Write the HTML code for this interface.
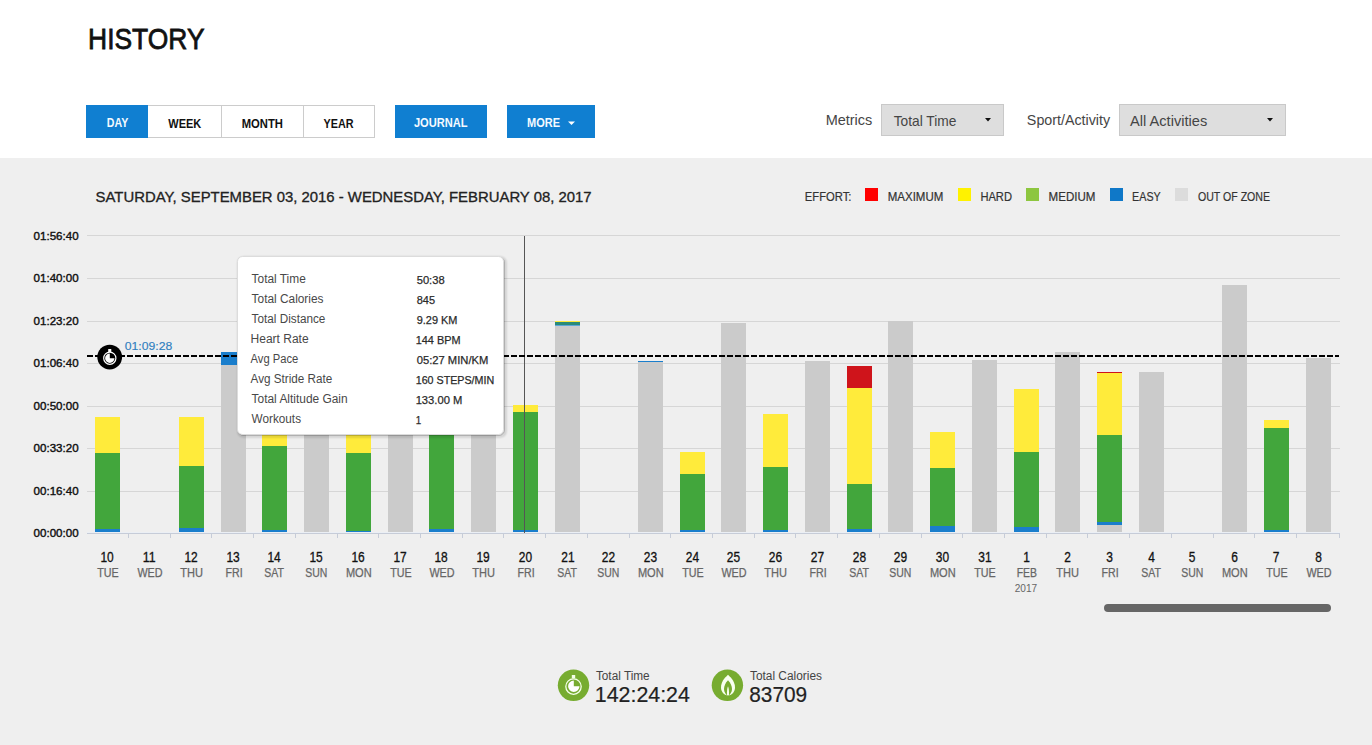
<!DOCTYPE html>
<html><head><meta charset="utf-8"><title>History</title>
<style>
html,body{margin:0;padding:0;width:1372px;height:745px;overflow:hidden;background:#fff;}
svg{display:block;font-family:"Liberation Sans", sans-serif;}
</style></head><body>
<svg width="1372" height="745" viewBox="0 0 1372 745">
<defs><filter id="blur" x="-10%" y="-10%" width="120%" height="120%"><feGaussianBlur stdDeviation="1"/></filter><filter id="sh" x="-5%" y="-5%" width="110%" height="110%"><feDropShadow dx="0" dy="0" stdDeviation="1.2" flood-color="#000" flood-opacity="0.35"/></filter></defs>
<rect x="0" y="0" width="1372" height="158" fill="#ffffff" shape-rendering="crispEdges"/>
<rect x="0" y="158" width="1372" height="587" fill="#efefef" shape-rendering="crispEdges"/>
<text x="88.10" y="49.4" font-size="30.4" fill="#111" font-weight="normal" textLength="116.44" lengthAdjust="spacingAndGlyphs" stroke="#111" stroke-width="0.8">HISTORY</text>
<rect x="86" y="105" width="62" height="33" fill="#107fd1" shape-rendering="crispEdges"/>
<rect x="148" y="105" width="227" height="33" fill="#cccccc" shape-rendering="crispEdges"/>
<rect x="148" y="106" width="226" height="31" fill="#ffffff" shape-rendering="crispEdges"/>
<rect x="221" y="106" width="1" height="31" fill="#cccccc" shape-rendering="crispEdges"/>
<rect x="303" y="106" width="1" height="31" fill="#cccccc" shape-rendering="crispEdges"/>
<text x="106.80" y="127" font-size="12.8" fill="#f4faff" font-weight="bold" textLength="21.45" lengthAdjust="spacingAndGlyphs">DAY</text>
<text x="168.30" y="128" font-size="12.8" fill="#111" font-weight="bold" textLength="32.99" lengthAdjust="spacingAndGlyphs">WEEK</text>
<text x="241.67" y="128" font-size="12.8" fill="#111" font-weight="bold" textLength="41.26" lengthAdjust="spacingAndGlyphs">MONTH</text>
<text x="323.47" y="128" font-size="12.8" fill="#111" font-weight="bold" textLength="30.05" lengthAdjust="spacingAndGlyphs">YEAR</text>
<rect x="395" y="105" width="92" height="33" fill="#107fd1" shape-rendering="crispEdges"/>
<text x="413.93" y="127" font-size="12.8" fill="#f4faff" font-weight="bold" textLength="53.71" lengthAdjust="spacingAndGlyphs">JOURNAL</text>
<rect x="507" y="105" width="88" height="33" fill="#107fd1" shape-rendering="crispEdges"/>
<text x="527.07" y="127" font-size="12.8" fill="#f4faff" font-weight="bold" textLength="33.00" lengthAdjust="spacingAndGlyphs">MORE</text>
<path d="M568 121.5 L575 121.5 L571.5 125 Z" fill="#fff"/>
<text x="825.65" y="125" font-size="14.5" fill="#454545" font-weight="normal" textLength="46.67" lengthAdjust="spacingAndGlyphs">Metrics</text>
<rect x="881" y="104" width="123" height="32" fill="#c9c9c9" shape-rendering="crispEdges"/>
<rect x="882" y="105" width="121" height="30" fill="#dedede" shape-rendering="crispEdges"/>
<text x="893.70" y="126" font-size="14.5" fill="#454545" font-weight="normal" textLength="62.75" lengthAdjust="spacingAndGlyphs">Total Time</text>
<path d="M985 118 L991 118 L988 121.5 Z" fill="#111"/>
<text x="1026.86" y="125" font-size="14" fill="#454545" font-weight="normal" textLength="83.27" lengthAdjust="spacingAndGlyphs">Sport/Activity</text>
<rect x="1119" y="104" width="167" height="32" fill="#c9c9c9" shape-rendering="crispEdges"/>
<rect x="1120" y="105" width="165" height="30" fill="#dedede" shape-rendering="crispEdges"/>
<text x="1130.01" y="126" font-size="14.5" fill="#454545" font-weight="normal" textLength="77.22" lengthAdjust="spacingAndGlyphs">All Activities</text>
<path d="M1267 118 L1273 118 L1270 121.5 Z" fill="#111"/>
<text x="95.62" y="202" font-size="14.5" fill="#222" font-weight="normal" textLength="495.99" lengthAdjust="spacingAndGlyphs" stroke="#222" stroke-width="0.3">SATURDAY, SEPTEMBER 03, 2016 - WEDNESDAY, FEBRUARY 08, 2017</text>
<text x="804.82" y="201" font-size="12.2" fill="#333" font-weight="normal" textLength="46.60" lengthAdjust="spacingAndGlyphs" stroke="#333" stroke-width="0.2">EFFORT:</text>
<rect x="865" y="188" width="13" height="13" fill="#ff0000" shape-rendering="crispEdges"/>
<text x="887.72" y="201" font-size="12.2" fill="#333" font-weight="normal" textLength="55.57" lengthAdjust="spacingAndGlyphs" stroke="#333" stroke-width="0.2">MAXIMUM</text>
<rect x="958" y="188" width="13" height="13" fill="#fff200" shape-rendering="crispEdges"/>
<text x="980.38" y="201" font-size="12.2" fill="#333" font-weight="normal" textLength="31.62" lengthAdjust="spacingAndGlyphs" stroke="#333" stroke-width="0.2">HARD</text>
<rect x="1026" y="188" width="13" height="13" fill="#8dc63f" shape-rendering="crispEdges"/>
<text x="1048.58" y="201" font-size="12.2" fill="#333" font-weight="normal" textLength="46.95" lengthAdjust="spacingAndGlyphs" stroke="#333" stroke-width="0.2">MEDIUM</text>
<rect x="1110" y="188" width="13" height="13" fill="#0f78c8" shape-rendering="crispEdges"/>
<text x="1132.10" y="201" font-size="12.2" fill="#333" font-weight="normal" textLength="28.65" lengthAdjust="spacingAndGlyphs" stroke="#333" stroke-width="0.2">EASY</text>
<rect x="1175" y="188" width="13" height="13" fill="#dcdcdc" shape-rendering="crispEdges"/>
<text x="1198.00" y="201" font-size="12.2" fill="#333" font-weight="normal" textLength="72.00" lengthAdjust="spacingAndGlyphs" stroke="#333" stroke-width="0.2">OUT OF ZONE</text>
<rect x="87" y="235" width="1252.5" height="1" fill="#d6d6d6" shape-rendering="crispEdges"/>
<rect x="87" y="278" width="1252.5" height="1" fill="#d6d6d6" shape-rendering="crispEdges"/>
<rect x="87" y="321" width="1252.5" height="1" fill="#d6d6d6" shape-rendering="crispEdges"/>
<rect x="87" y="363" width="1252.5" height="1" fill="#d6d6d6" shape-rendering="crispEdges"/>
<rect x="87" y="406" width="1252.5" height="1" fill="#d6d6d6" shape-rendering="crispEdges"/>
<rect x="87" y="448" width="1252.5" height="1" fill="#d6d6d6" shape-rendering="crispEdges"/>
<rect x="87" y="491" width="1252.5" height="1" fill="#d6d6d6" shape-rendering="crispEdges"/>
<text x="33.60" y="239.8" font-size="11.6" fill="#111" font-weight="normal" textLength="45.06" lengthAdjust="spacingAndGlyphs" stroke="#111" stroke-width="0.4">01:56:40</text>
<text x="33.60" y="282.3" font-size="11.6" fill="#111" font-weight="normal" textLength="45.06" lengthAdjust="spacingAndGlyphs" stroke="#111" stroke-width="0.4">01:40:00</text>
<text x="33.60" y="324.8" font-size="11.6" fill="#111" font-weight="normal" textLength="45.06" lengthAdjust="spacingAndGlyphs" stroke="#111" stroke-width="0.4">01:23:20</text>
<text x="33.60" y="367.3" font-size="11.6" fill="#111" font-weight="normal" textLength="45.06" lengthAdjust="spacingAndGlyphs" stroke="#111" stroke-width="0.4">01:06:40</text>
<text x="33.60" y="409.8" font-size="11.6" fill="#111" font-weight="normal" textLength="45.06" lengthAdjust="spacingAndGlyphs" stroke="#111" stroke-width="0.4">00:50:00</text>
<text x="33.60" y="452.3" font-size="11.6" fill="#111" font-weight="normal" textLength="45.06" lengthAdjust="spacingAndGlyphs" stroke="#111" stroke-width="0.4">00:33:20</text>
<text x="33.60" y="494.8" font-size="11.6" fill="#111" font-weight="normal" textLength="45.06" lengthAdjust="spacingAndGlyphs" stroke="#111" stroke-width="0.4">00:16:40</text>
<text x="33.60" y="537.3" font-size="11.6" fill="#111" font-weight="normal" textLength="45.06" lengthAdjust="spacingAndGlyphs" stroke="#111" stroke-width="0.4">00:00:00</text>
<rect x="95" y="416.5" width="25" height="36.30000000000001" fill="#ffeb3b" shape-rendering="crispEdges"/>
<rect x="95" y="452.8" width="25" height="75.90000000000003" fill="#42a63c" shape-rendering="crispEdges"/>
<rect x="95" y="528.7" width="25" height="3.2999999999999545" fill="#1a7ecc" shape-rendering="crispEdges"/>
<rect x="179" y="416.5" width="25" height="49.10000000000002" fill="#ffeb3b" shape-rendering="crispEdges"/>
<rect x="179" y="465.6" width="25" height="62.39999999999998" fill="#42a63c" shape-rendering="crispEdges"/>
<rect x="179" y="528" width="25" height="4" fill="#1a7ecc" shape-rendering="crispEdges"/>
<rect x="221" y="352" width="25" height="12.699999999999989" fill="#1a7ecc" shape-rendering="crispEdges"/>
<rect x="221" y="364.7" width="25" height="167.3" fill="#cbcbcb" shape-rendering="crispEdges"/>
<rect x="262" y="420" width="25" height="26" fill="#ffeb3b" shape-rendering="crispEdges"/>
<rect x="262" y="446" width="25" height="84" fill="#42a63c" shape-rendering="crispEdges"/>
<rect x="262" y="530" width="25" height="2" fill="#1a7ecc" shape-rendering="crispEdges"/>
<rect x="304" y="400" width="25" height="132" fill="#cbcbcb" shape-rendering="crispEdges"/>
<rect x="346" y="420" width="25" height="32.80000000000001" fill="#ffeb3b" shape-rendering="crispEdges"/>
<rect x="346" y="452.8" width="25" height="78.19999999999999" fill="#42a63c" shape-rendering="crispEdges"/>
<rect x="346" y="531" width="25" height="1" fill="#1a7ecc" shape-rendering="crispEdges"/>
<rect x="388" y="400" width="25" height="132" fill="#cbcbcb" shape-rendering="crispEdges"/>
<rect x="429" y="420" width="25" height="10" fill="#ffeb3b" shape-rendering="crispEdges"/>
<rect x="429" y="430" width="25" height="98.60000000000002" fill="#42a63c" shape-rendering="crispEdges"/>
<rect x="429" y="528.6" width="25" height="3.3999999999999773" fill="#1a7ecc" shape-rendering="crispEdges"/>
<rect x="471" y="400" width="25" height="132" fill="#cbcbcb" shape-rendering="crispEdges"/>
<rect x="513" y="405" width="25" height="7" fill="#ffeb3b" shape-rendering="crispEdges"/>
<rect x="513" y="412" width="25" height="118" fill="#42a63c" shape-rendering="crispEdges"/>
<rect x="513" y="530" width="25" height="2" fill="#1a7ecc" shape-rendering="crispEdges"/>
<rect x="555" y="321" width="25" height="1" fill="#ffeb3b" shape-rendering="crispEdges"/>
<rect x="555" y="322" width="25" height="3.3000000000000114" fill="#2a8a7a" shape-rendering="crispEdges"/>
<rect x="555" y="325.3" width="25" height="0.6999999999999886" fill="#5aa6d6" shape-rendering="crispEdges"/>
<rect x="555" y="326" width="25" height="206" fill="#cbcbcb" shape-rendering="crispEdges"/>
<rect x="638" y="361" width="25" height="1" fill="#1a7ecc" shape-rendering="crispEdges"/>
<rect x="638" y="362" width="25" height="170" fill="#cbcbcb" shape-rendering="crispEdges"/>
<rect x="680" y="452" width="25" height="21.899999999999977" fill="#ffeb3b" shape-rendering="crispEdges"/>
<rect x="680" y="473.9" width="25" height="55.700000000000045" fill="#42a63c" shape-rendering="crispEdges"/>
<rect x="680" y="529.6" width="25" height="2.3999999999999773" fill="#1a7ecc" shape-rendering="crispEdges"/>
<rect x="721" y="322.5" width="25" height="209.5" fill="#cbcbcb" shape-rendering="crispEdges"/>
<rect x="763" y="414.3" width="25" height="53.099999999999966" fill="#ffeb3b" shape-rendering="crispEdges"/>
<rect x="763" y="467.4" width="25" height="62.200000000000045" fill="#42a63c" shape-rendering="crispEdges"/>
<rect x="763" y="529.6" width="25" height="2.3999999999999773" fill="#1a7ecc" shape-rendering="crispEdges"/>
<rect x="805" y="360.5" width="25" height="171.5" fill="#cbcbcb" shape-rendering="crispEdges"/>
<rect x="847" y="365.9" width="25" height="22.30000000000001" fill="#cf141b" shape-rendering="crispEdges"/>
<rect x="847" y="388.2" width="25" height="96.0" fill="#ffeb3b" shape-rendering="crispEdges"/>
<rect x="847" y="484.2" width="25" height="44.69999999999999" fill="#42a63c" shape-rendering="crispEdges"/>
<rect x="847" y="528.9" width="25" height="3.1000000000000227" fill="#1a7ecc" shape-rendering="crispEdges"/>
<rect x="888" y="321.2" width="25" height="210.8" fill="#cbcbcb" shape-rendering="crispEdges"/>
<rect x="930" y="431.8" width="25" height="36.0" fill="#ffeb3b" shape-rendering="crispEdges"/>
<rect x="930" y="467.8" width="25" height="57.900000000000034" fill="#42a63c" shape-rendering="crispEdges"/>
<rect x="930" y="525.7" width="25" height="6.2999999999999545" fill="#1a7ecc" shape-rendering="crispEdges"/>
<rect x="972" y="359.6" width="25" height="172.39999999999998" fill="#cbcbcb" shape-rendering="crispEdges"/>
<rect x="1014" y="388.6" width="25" height="63.19999999999999" fill="#ffeb3b" shape-rendering="crispEdges"/>
<rect x="1014" y="451.8" width="25" height="74.99999999999994" fill="#42a63c" shape-rendering="crispEdges"/>
<rect x="1014" y="526.8" width="25" height="5.2000000000000455" fill="#1a7ecc" shape-rendering="crispEdges"/>
<rect x="1055" y="352" width="25" height="180" fill="#cbcbcb" shape-rendering="crispEdges"/>
<rect x="1097" y="371.7" width="25" height="1.3000000000000114" fill="#cf141b" shape-rendering="crispEdges"/>
<rect x="1097" y="373" width="25" height="61.89999999999998" fill="#ffeb3b" shape-rendering="crispEdges"/>
<rect x="1097" y="434.9" width="25" height="87.39999999999998" fill="#42a63c" shape-rendering="crispEdges"/>
<rect x="1097" y="522.3" width="25" height="2.800000000000068" fill="#1a7ecc" shape-rendering="crispEdges"/>
<rect x="1097" y="525.1" width="25" height="6.899999999999977" fill="#cbcbcb" shape-rendering="crispEdges"/>
<rect x="1139" y="371.7" width="25" height="160.3" fill="#cbcbcb" shape-rendering="crispEdges"/>
<rect x="1222" y="285.2" width="25" height="246.8" fill="#cbcbcb" shape-rendering="crispEdges"/>
<rect x="1264" y="420.4" width="25" height="7.300000000000011" fill="#ffeb3b" shape-rendering="crispEdges"/>
<rect x="1264" y="427.7" width="25" height="102.19999999999999" fill="#42a63c" shape-rendering="crispEdges"/>
<rect x="1264" y="529.9" width="25" height="2.1000000000000227" fill="#1a7ecc" shape-rendering="crispEdges"/>
<rect x="1306" y="357.5" width="25" height="174.5" fill="#cbcbcb" shape-rendering="crispEdges"/>
<rect x="87" y="532" width="1252.5" height="1" fill="#eaf0f8" shape-rendering="crispEdges" opacity="0.7"/>
<rect x="87" y="533" width="1252.5" height="1" fill="#c6ccd8" shape-rendering="crispEdges"/>
<rect x="128" y="534" width="1" height="4" fill="#c6ccd8" shape-rendering="crispEdges"/>
<rect x="170" y="534" width="1" height="4" fill="#c6ccd8" shape-rendering="crispEdges"/>
<rect x="211" y="534" width="1" height="4" fill="#c6ccd8" shape-rendering="crispEdges"/>
<rect x="253" y="534" width="1" height="4" fill="#c6ccd8" shape-rendering="crispEdges"/>
<rect x="295" y="534" width="1" height="4" fill="#c6ccd8" shape-rendering="crispEdges"/>
<rect x="337" y="534" width="1" height="4" fill="#c6ccd8" shape-rendering="crispEdges"/>
<rect x="378" y="534" width="1" height="4" fill="#c6ccd8" shape-rendering="crispEdges"/>
<rect x="420" y="534" width="1" height="4" fill="#c6ccd8" shape-rendering="crispEdges"/>
<rect x="462" y="534" width="1" height="4" fill="#c6ccd8" shape-rendering="crispEdges"/>
<rect x="503" y="534" width="1" height="4" fill="#c6ccd8" shape-rendering="crispEdges"/>
<rect x="545" y="534" width="1" height="4" fill="#c6ccd8" shape-rendering="crispEdges"/>
<rect x="587" y="534" width="1" height="4" fill="#c6ccd8" shape-rendering="crispEdges"/>
<rect x="629" y="534" width="1" height="4" fill="#c6ccd8" shape-rendering="crispEdges"/>
<rect x="670" y="534" width="1" height="4" fill="#c6ccd8" shape-rendering="crispEdges"/>
<rect x="712" y="534" width="1" height="4" fill="#c6ccd8" shape-rendering="crispEdges"/>
<rect x="754" y="534" width="1" height="4" fill="#c6ccd8" shape-rendering="crispEdges"/>
<rect x="795" y="534" width="1" height="4" fill="#c6ccd8" shape-rendering="crispEdges"/>
<rect x="837" y="534" width="1" height="4" fill="#c6ccd8" shape-rendering="crispEdges"/>
<rect x="879" y="534" width="1" height="4" fill="#c6ccd8" shape-rendering="crispEdges"/>
<rect x="921" y="534" width="1" height="4" fill="#c6ccd8" shape-rendering="crispEdges"/>
<rect x="962" y="534" width="1" height="4" fill="#c6ccd8" shape-rendering="crispEdges"/>
<rect x="1004" y="534" width="1" height="4" fill="#c6ccd8" shape-rendering="crispEdges"/>
<rect x="1046" y="534" width="1" height="4" fill="#c6ccd8" shape-rendering="crispEdges"/>
<rect x="1087" y="534" width="1" height="4" fill="#c6ccd8" shape-rendering="crispEdges"/>
<rect x="1129" y="534" width="1" height="4" fill="#c6ccd8" shape-rendering="crispEdges"/>
<rect x="1171" y="534" width="1" height="4" fill="#c6ccd8" shape-rendering="crispEdges"/>
<rect x="1213" y="534" width="1" height="4" fill="#c6ccd8" shape-rendering="crispEdges"/>
<rect x="1254" y="534" width="1" height="4" fill="#c6ccd8" shape-rendering="crispEdges"/>
<rect x="1296" y="534" width="1" height="4" fill="#c6ccd8" shape-rendering="crispEdges"/>
<rect x="1339" y="534" width="1" height="4" fill="#c6ccd8" shape-rendering="crispEdges"/>
<text x="100.38" y="562" font-size="14" fill="#111" font-weight="normal" textLength="13.30" lengthAdjust="spacingAndGlyphs" stroke="#111" stroke-width="0.3">10</text>
<text x="97.22" y="577" font-size="12" fill="#666" font-weight="normal" textLength="21.46" lengthAdjust="spacingAndGlyphs" stroke="#666" stroke-width="0.25">TUE</text>
<text x="142.85" y="562" font-size="14" fill="#111" font-weight="normal" textLength="12.81" lengthAdjust="spacingAndGlyphs" stroke="#111" stroke-width="0.3">11</text>
<text x="137.38" y="577" font-size="12" fill="#666" font-weight="normal" textLength="25.14" lengthAdjust="spacingAndGlyphs" stroke="#666" stroke-width="0.25">WED</text>
<text x="184.38" y="562" font-size="14" fill="#111" font-weight="normal" textLength="13.30" lengthAdjust="spacingAndGlyphs" stroke="#111" stroke-width="0.3">12</text>
<text x="180.30" y="577" font-size="12" fill="#666" font-weight="normal" textLength="22.70" lengthAdjust="spacingAndGlyphs" stroke="#666" stroke-width="0.25">THU</text>
<text x="226.38" y="562" font-size="14" fill="#111" font-weight="normal" textLength="13.30" lengthAdjust="spacingAndGlyphs" stroke="#111" stroke-width="0.3">13</text>
<text x="225.52" y="577" font-size="12" fill="#666" font-weight="normal" textLength="17.19" lengthAdjust="spacingAndGlyphs" stroke="#666" stroke-width="0.25">FRI</text>
<text x="267.38" y="562" font-size="14" fill="#111" font-weight="normal" textLength="13.30" lengthAdjust="spacingAndGlyphs" stroke="#111" stroke-width="0.3">14</text>
<text x="264.22" y="577" font-size="12" fill="#666" font-weight="normal" textLength="19.64" lengthAdjust="spacingAndGlyphs" stroke="#666" stroke-width="0.25">SAT</text>
<text x="309.38" y="562" font-size="14" fill="#111" font-weight="normal" textLength="13.30" lengthAdjust="spacingAndGlyphs" stroke="#111" stroke-width="0.3">15</text>
<text x="305.30" y="577" font-size="12" fill="#666" font-weight="normal" textLength="22.09" lengthAdjust="spacingAndGlyphs" stroke="#666" stroke-width="0.25">SUN</text>
<text x="351.38" y="562" font-size="14" fill="#111" font-weight="normal" textLength="13.30" lengthAdjust="spacingAndGlyphs" stroke="#111" stroke-width="0.3">16</text>
<text x="345.92" y="577" font-size="12" fill="#666" font-weight="normal" textLength="25.77" lengthAdjust="spacingAndGlyphs" stroke="#666" stroke-width="0.25">MON</text>
<text x="393.38" y="562" font-size="14" fill="#111" font-weight="normal" textLength="13.30" lengthAdjust="spacingAndGlyphs" stroke="#111" stroke-width="0.3">17</text>
<text x="390.22" y="577" font-size="12" fill="#666" font-weight="normal" textLength="21.46" lengthAdjust="spacingAndGlyphs" stroke="#666" stroke-width="0.25">TUE</text>
<text x="434.38" y="562" font-size="14" fill="#111" font-weight="normal" textLength="13.30" lengthAdjust="spacingAndGlyphs" stroke="#111" stroke-width="0.3">18</text>
<text x="429.38" y="577" font-size="12" fill="#666" font-weight="normal" textLength="25.14" lengthAdjust="spacingAndGlyphs" stroke="#666" stroke-width="0.25">WED</text>
<text x="476.38" y="562" font-size="14" fill="#111" font-weight="normal" textLength="13.30" lengthAdjust="spacingAndGlyphs" stroke="#111" stroke-width="0.3">19</text>
<text x="472.30" y="577" font-size="12" fill="#666" font-weight="normal" textLength="22.70" lengthAdjust="spacingAndGlyphs" stroke="#666" stroke-width="0.25">THU</text>
<text x="518.85" y="562" font-size="14" fill="#111" font-weight="normal" textLength="13.30" lengthAdjust="spacingAndGlyphs" stroke="#111" stroke-width="0.3">20</text>
<text x="517.52" y="577" font-size="12" fill="#666" font-weight="normal" textLength="17.19" lengthAdjust="spacingAndGlyphs" stroke="#666" stroke-width="0.25">FRI</text>
<text x="561.33" y="562" font-size="14" fill="#111" font-weight="normal" textLength="13.30" lengthAdjust="spacingAndGlyphs" stroke="#111" stroke-width="0.3">21</text>
<text x="557.22" y="577" font-size="12" fill="#666" font-weight="normal" textLength="19.64" lengthAdjust="spacingAndGlyphs" stroke="#666" stroke-width="0.25">SAT</text>
<text x="601.85" y="562" font-size="14" fill="#111" font-weight="normal" textLength="13.30" lengthAdjust="spacingAndGlyphs" stroke="#111" stroke-width="0.3">22</text>
<text x="597.30" y="577" font-size="12" fill="#666" font-weight="normal" textLength="22.09" lengthAdjust="spacingAndGlyphs" stroke="#666" stroke-width="0.25">SUN</text>
<text x="643.85" y="562" font-size="14" fill="#111" font-weight="normal" textLength="13.30" lengthAdjust="spacingAndGlyphs" stroke="#111" stroke-width="0.3">23</text>
<text x="637.92" y="577" font-size="12" fill="#666" font-weight="normal" textLength="25.77" lengthAdjust="spacingAndGlyphs" stroke="#666" stroke-width="0.25">MON</text>
<text x="685.85" y="562" font-size="14" fill="#111" font-weight="normal" textLength="13.30" lengthAdjust="spacingAndGlyphs" stroke="#111" stroke-width="0.3">24</text>
<text x="682.22" y="577" font-size="12" fill="#666" font-weight="normal" textLength="21.46" lengthAdjust="spacingAndGlyphs" stroke="#666" stroke-width="0.25">TUE</text>
<text x="726.85" y="562" font-size="14" fill="#111" font-weight="normal" textLength="13.30" lengthAdjust="spacingAndGlyphs" stroke="#111" stroke-width="0.3">25</text>
<text x="721.38" y="577" font-size="12" fill="#666" font-weight="normal" textLength="25.14" lengthAdjust="spacingAndGlyphs" stroke="#666" stroke-width="0.25">WED</text>
<text x="768.85" y="562" font-size="14" fill="#111" font-weight="normal" textLength="13.30" lengthAdjust="spacingAndGlyphs" stroke="#111" stroke-width="0.3">26</text>
<text x="764.30" y="577" font-size="12" fill="#666" font-weight="normal" textLength="22.70" lengthAdjust="spacingAndGlyphs" stroke="#666" stroke-width="0.25">THU</text>
<text x="810.85" y="562" font-size="14" fill="#111" font-weight="normal" textLength="13.30" lengthAdjust="spacingAndGlyphs" stroke="#111" stroke-width="0.3">27</text>
<text x="809.52" y="577" font-size="12" fill="#666" font-weight="normal" textLength="17.19" lengthAdjust="spacingAndGlyphs" stroke="#666" stroke-width="0.25">FRI</text>
<text x="852.85" y="562" font-size="14" fill="#111" font-weight="normal" textLength="13.30" lengthAdjust="spacingAndGlyphs" stroke="#111" stroke-width="0.3">28</text>
<text x="849.22" y="577" font-size="12" fill="#666" font-weight="normal" textLength="19.64" lengthAdjust="spacingAndGlyphs" stroke="#666" stroke-width="0.25">SAT</text>
<text x="893.85" y="562" font-size="14" fill="#111" font-weight="normal" textLength="13.30" lengthAdjust="spacingAndGlyphs" stroke="#111" stroke-width="0.3">29</text>
<text x="889.30" y="577" font-size="12" fill="#666" font-weight="normal" textLength="22.09" lengthAdjust="spacingAndGlyphs" stroke="#666" stroke-width="0.25">SUN</text>
<text x="935.85" y="562" font-size="14" fill="#111" font-weight="normal" textLength="13.30" lengthAdjust="spacingAndGlyphs" stroke="#111" stroke-width="0.3">30</text>
<text x="929.92" y="577" font-size="12" fill="#666" font-weight="normal" textLength="25.77" lengthAdjust="spacingAndGlyphs" stroke="#666" stroke-width="0.25">MON</text>
<text x="978.33" y="562" font-size="14" fill="#111" font-weight="normal" textLength="13.30" lengthAdjust="spacingAndGlyphs" stroke="#111" stroke-width="0.3">31</text>
<text x="974.22" y="577" font-size="12" fill="#666" font-weight="normal" textLength="21.46" lengthAdjust="spacingAndGlyphs" stroke="#666" stroke-width="0.25">TUE</text>
<text x="1023.17" y="562" font-size="14" fill="#111" font-weight="normal" textLength="6.65" lengthAdjust="spacingAndGlyphs" stroke="#111" stroke-width="0.3">1</text>
<text x="1016.68" y="577" font-size="12" fill="#666" font-weight="normal" textLength="20.25" lengthAdjust="spacingAndGlyphs" stroke="#666" stroke-width="0.25">FEB</text>
<text x="1064.17" y="562" font-size="14" fill="#111" font-weight="normal" textLength="6.65" lengthAdjust="spacingAndGlyphs" stroke="#111" stroke-width="0.3">2</text>
<text x="1056.30" y="577" font-size="12" fill="#666" font-weight="normal" textLength="22.70" lengthAdjust="spacingAndGlyphs" stroke="#666" stroke-width="0.25">THU</text>
<text x="1106.17" y="562" font-size="14" fill="#111" font-weight="normal" textLength="6.65" lengthAdjust="spacingAndGlyphs" stroke="#111" stroke-width="0.3">3</text>
<text x="1101.52" y="577" font-size="12" fill="#666" font-weight="normal" textLength="17.19" lengthAdjust="spacingAndGlyphs" stroke="#666" stroke-width="0.25">FRI</text>
<text x="1148.17" y="562" font-size="14" fill="#111" font-weight="normal" textLength="6.65" lengthAdjust="spacingAndGlyphs" stroke="#111" stroke-width="0.3">4</text>
<text x="1141.22" y="577" font-size="12" fill="#666" font-weight="normal" textLength="19.64" lengthAdjust="spacingAndGlyphs" stroke="#666" stroke-width="0.25">SAT</text>
<text x="1188.70" y="562" font-size="14" fill="#111" font-weight="normal" textLength="6.65" lengthAdjust="spacingAndGlyphs" stroke="#111" stroke-width="0.3">5</text>
<text x="1181.30" y="577" font-size="12" fill="#666" font-weight="normal" textLength="22.09" lengthAdjust="spacingAndGlyphs" stroke="#666" stroke-width="0.25">SUN</text>
<text x="1231.17" y="562" font-size="14" fill="#111" font-weight="normal" textLength="6.65" lengthAdjust="spacingAndGlyphs" stroke="#111" stroke-width="0.3">6</text>
<text x="1221.92" y="577" font-size="12" fill="#666" font-weight="normal" textLength="25.77" lengthAdjust="spacingAndGlyphs" stroke="#666" stroke-width="0.25">MON</text>
<text x="1272.70" y="562" font-size="14" fill="#111" font-weight="normal" textLength="6.65" lengthAdjust="spacingAndGlyphs" stroke="#111" stroke-width="0.3">7</text>
<text x="1266.22" y="577" font-size="12" fill="#666" font-weight="normal" textLength="21.46" lengthAdjust="spacingAndGlyphs" stroke="#666" stroke-width="0.25">TUE</text>
<text x="1315.17" y="562" font-size="14" fill="#111" font-weight="normal" textLength="6.65" lengthAdjust="spacingAndGlyphs" stroke="#111" stroke-width="0.3">8</text>
<text x="1306.38" y="577" font-size="12" fill="#666" font-weight="normal" textLength="25.14" lengthAdjust="spacingAndGlyphs" stroke="#666" stroke-width="0.25">WED</text>
<text x="1014.70" y="592" font-size="11" fill="#666" font-weight="normal" textLength="22.50" lengthAdjust="spacingAndGlyphs">2017</text>
<rect x="524" y="236" width="1" height="297" fill="#555" shape-rendering="crispEdges"/>
<line x1="87" y1="356" x2="1339" y2="356" stroke="#000" stroke-width="2" stroke-dasharray="6 2"/>
<text x="124.70" y="350" font-size="11.8" fill="#2f80bf" font-weight="normal" textLength="47.55" lengthAdjust="spacingAndGlyphs" stroke="#2f80bf" stroke-width="0.15">01:09:28</text>
<circle cx="109.7" cy="357.1" r="12.4" fill="#000"/>
<circle cx="109.8" cy="358.2" r="6.1" fill="none" stroke="#fff" stroke-width="1.2"/>
<path d="M109.8 358.2 L109.8 353.5 A4.7 4.7 0 1 0 114.5 358.2 Z" fill="#fff"/>
<rect x="108.2" y="349" width="3.1" height="3" rx="0.3" fill="#fff"/>
<rect x="238.5" y="257.5" width="267" height="179" rx="5" ry="5" fill="none" stroke="#000" stroke-width="1.6" opacity="0.22" filter="url(#blur)"/>
<rect x="238.3" y="257.3" width="266" height="178" rx="5" ry="5" fill="none" stroke="#000" stroke-width="1" opacity="0.25"/>
<rect x="237.5" y="256.5" width="266" height="178" rx="5" ry="5" fill="#fff" stroke="#dcdcdc" stroke-width="1"/>
<text x="251.60" y="283" font-size="12.5" fill="#484848" font-weight="normal" textLength="54.16" lengthAdjust="spacingAndGlyphs">Total Time</text>
<text x="416.70" y="284" font-size="11.4" fill="#2a2a2a" font-weight="normal" textLength="27.95" lengthAdjust="spacingAndGlyphs" stroke="#2a2a2a" stroke-width="0.25">50:38</text>
<text x="251.60" y="303" font-size="12.5" fill="#484848" font-weight="normal" textLength="71.90" lengthAdjust="spacingAndGlyphs">Total Calories</text>
<text x="416.70" y="304" font-size="11.4" fill="#2a2a2a" font-weight="normal" textLength="18.30" lengthAdjust="spacingAndGlyphs" stroke="#2a2a2a" stroke-width="0.25">845</text>
<text x="251.60" y="323" font-size="12.5" fill="#484848" font-weight="normal" textLength="73.78" lengthAdjust="spacingAndGlyphs">Total Distance</text>
<text x="416.70" y="324" font-size="11.4" fill="#2a2a2a" font-weight="normal" textLength="40.74" lengthAdjust="spacingAndGlyphs" stroke="#2a2a2a" stroke-width="0.25">9.29 KM</text>
<text x="250.52" y="343" font-size="12.5" fill="#484848" font-weight="normal" textLength="58.14" lengthAdjust="spacingAndGlyphs">Heart Rate</text>
<text x="415.68" y="344" font-size="11.4" fill="#2a2a2a" font-weight="normal" textLength="44.82" lengthAdjust="spacingAndGlyphs" stroke="#2a2a2a" stroke-width="0.25">144 BPM</text>
<text x="250.59" y="363" font-size="12.5" fill="#484848" font-weight="normal" textLength="47.74" lengthAdjust="spacingAndGlyphs">Avg Pace</text>
<text x="416.70" y="364" font-size="11.4" fill="#2a2a2a" font-weight="normal" textLength="71.66" lengthAdjust="spacingAndGlyphs" stroke="#2a2a2a" stroke-width="0.25">05:27 MIN/KM</text>
<text x="250.57" y="383" font-size="12.5" fill="#484848" font-weight="normal" textLength="81.67" lengthAdjust="spacingAndGlyphs">Avg Stride Rate</text>
<text x="415.70" y="384" font-size="11.4" fill="#2a2a2a" font-weight="normal" textLength="78.48" lengthAdjust="spacingAndGlyphs" stroke="#2a2a2a" stroke-width="0.25">160 STEPS/MIN</text>
<text x="251.60" y="403" font-size="12.5" fill="#484848" font-weight="normal" textLength="96.04" lengthAdjust="spacingAndGlyphs">Total Altitude Gain</text>
<text x="415.65" y="404" font-size="11.4" fill="#2a2a2a" font-weight="normal" textLength="46.68" lengthAdjust="spacingAndGlyphs" stroke="#2a2a2a" stroke-width="0.25">133.00 M</text>
<text x="251.60" y="423" font-size="12.5" fill="#484848" font-weight="normal" textLength="49.42" lengthAdjust="spacingAndGlyphs">Workouts</text>
<text x="415.75" y="424" font-size="11.4" fill="#2a2a2a" font-weight="normal" textLength="5.42" lengthAdjust="spacingAndGlyphs" stroke="#2a2a2a" stroke-width="0.25">1</text>
<rect x="1104" y="604" width="227" height="8" rx="4" ry="4" fill="#666"/>
<circle cx="573.5" cy="685.3" r="15.7" fill="#77ac30"/>
<circle cx="573.5" cy="686.6" r="7.7" fill="none" stroke="#f4ffe8" stroke-width="1.3"/>
<path d="M573.8 686.2 L573.8 680.5 A5.7 5.7 0 1 0 579.5 686.2 Z" fill="#fff"/>
<rect x="571.8" y="675" width="3.4" height="3.4" fill="#f4ffe8"/>
<text x="595.90" y="680" font-size="12" fill="#444" font-weight="normal" textLength="53.78" lengthAdjust="spacingAndGlyphs">Total Time</text>
<text x="594.85" y="701.5" font-size="21.8" fill="#222" font-weight="normal" textLength="94.99" lengthAdjust="spacingAndGlyphs" stroke="#222" stroke-width="0.2">142:24:24</text>
<circle cx="727.4" cy="685.3" r="15.7" fill="#77ac30"/>
<path d="M728 674.8 C724 678.5 721 682.5 721 687.5 C721 691.5 724 695.3 728 695.3 C732 695.3 735 691.5 735 687.5 C735 682.5 732 678.5 728 674.8 Z" fill="#f8fff0"/>
<path d="M728 680.3 C725.5 683 724 686 724 689 C724 692 726 694.5 727.2 695.4 L728.8 695.4 C730 694.5 732 692 732 689 C732 686 730.5 683 728 680.3 Z" fill="#77ac30"/>
<path d="M728 686.3 C727.2 688 726.8 691 727 695.3 L729 695.3 C729.2 691 728.8 688 728 686.3 Z" fill="#f8fff0"/>
<text x="750.00" y="680" font-size="12" fill="#444" font-weight="normal" textLength="71.92" lengthAdjust="spacingAndGlyphs">Total Calories</text>
<text x="749.24" y="701.5" font-size="21.8" fill="#222" font-weight="normal" textLength="57.89" lengthAdjust="spacingAndGlyphs" stroke="#222" stroke-width="0.2">83709</text>
</svg>
</body></html>
